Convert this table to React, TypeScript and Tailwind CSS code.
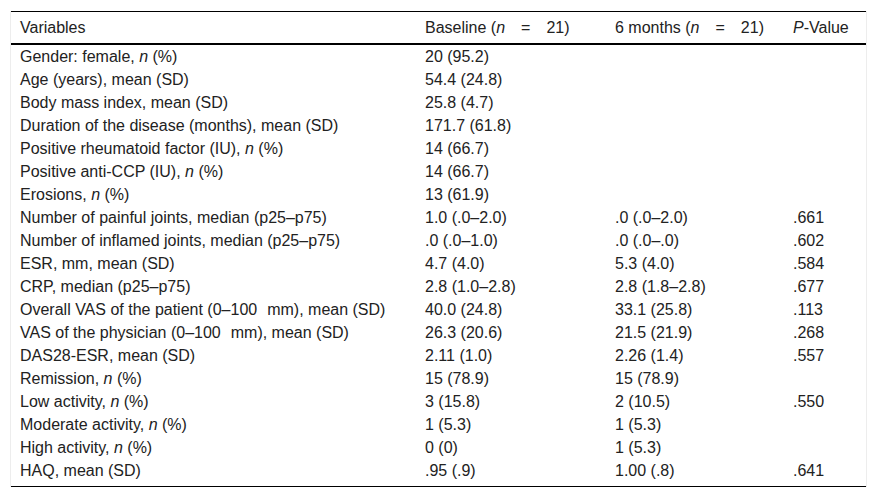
import type { ReactNode } from "react";

interface Row {
    label: ReactNode;
    baseline: string;
    sixMonths: string;
    p: string;
}

const N = () => <i>n</i>;

// wide gap used between "100" and "mm" in the source table
const Gap = () => <span className="inline-block w-[10px]" />;

const rows: Row[] = [
    { label: <>Gender: female, <N /> (%)</>, baseline: "20 (95.2)", sixMonths: "", p: "" },
    { label: "Age (years), mean (SD)", baseline: "54.4 (24.8)", sixMonths: "", p: "" },
    { label: "Body mass index, mean (SD)", baseline: "25.8 (4.7)", sixMonths: "", p: "" },
    { label: "Duration of the disease (months), mean (SD)", baseline: "171.7 (61.8)", sixMonths: "", p: "" },
    { label: <>Positive rheumatoid factor (IU), <N /> (%)</>, baseline: "14 (66.7)", sixMonths: "", p: "" },
    { label: <>Positive anti-CCP (IU), <N /> (%)</>, baseline: "14 (66.7)", sixMonths: "", p: "" },
    { label: <>Erosions, <N /> (%)</>, baseline: "13 (61.9)", sixMonths: "", p: "" },
    { label: "Number of painful joints, median (p25–p75)", baseline: "1.0 (.0–2.0)", sixMonths: ".0 (.0–2.0)", p: ".661" },
    { label: "Number of inflamed joints, median (p25–p75)", baseline: ".0 (.0–1.0)", sixMonths: ".0 (.0–.0)", p: ".602" },
    { label: "ESR, mm, mean (SD)", baseline: "4.7 (4.0)", sixMonths: "5.3 (4.0)", p: ".584" },
    { label: "CRP, median (p25–p75)", baseline: "2.8 (1.0–2.8)", sixMonths: "2.8 (1.8–2.8)", p: ".677" },
    { label: <>Overall VAS of the patient (0–100<Gap />mm), mean (SD)</>, baseline: "40.0 (24.8)", sixMonths: "33.1 (25.8)", p: ".113" },
    { label: <>VAS of the physician (0–100<Gap />mm), mean (SD)</>, baseline: "26.3 (20.6)", sixMonths: "21.5 (21.9)", p: ".268" },
    { label: "DAS28-ESR, mean (SD)", baseline: "2.11 (1.0)", sixMonths: "2.26 (1.4)", p: ".557" },
    { label: <>Remission, <N /> (%)</>, baseline: "15 (78.9)", sixMonths: "15 (78.9)", p: "" },
    { label: <>Low activity, <N /> (%)</>, baseline: "3 (15.8)", sixMonths: "2 (10.5)", p: ".550" },
    { label: <>Moderate activity, <N /> (%)</>, baseline: "1 (5.3)", sixMonths: "1 (5.3)", p: "" },
    { label: <>High activity, <N /> (%)</>, baseline: "0 (0)", sixMonths: "1 (5.3)", p: "" },
    { label: "HAQ, mean (SD)", baseline: ".95 (.9)", sixMonths: "1.00 (.8)", p: ".641" },
];

const cols = "grid grid-cols-[405px_190px_178px_1fr]";

export default function App() {
    return (
        <div className="min-h-screen bg-white pt-[11px] pl-[10px] font-['Liberation_Sans',Arial,sans-serif] text-[16px] leading-[18px] text-[#222]">
            <div className="w-[857px] border-x border-[#ededed]">
                {/* Header */}
                <div className={`${cols} h-[34px] items-center border-t border-b-2 border-black`}>
                    <div className="pl-[9px]">Variables</div>
                    <div className="pl-[9px] whitespace-nowrap">
                        Baseline (<i>n</i>{"\u2003=\u2003"}21)
                    </div>
                    <div className="pl-[9px] whitespace-nowrap">
                        6 months (<i>n</i>{"\u2003=\u2003"}21)
                    </div>
                    <div className="pl-[9px]">
                        <i>P</i>-Value
                    </div>
                </div>
                {/* Body */}
                <div className="border-b border-black pb-[4px]">
                    {rows.map((row, i) => (
                        <div key={i} className={`${cols} h-[23px] items-center`}>
                            <div className="pl-[9px] whitespace-nowrap">{row.label}</div>
                            <div className="pl-[9px]">{row.baseline}</div>
                            <div className="pl-[9px]">{row.sixMonths}</div>
                            <div className="pl-[9px]">{row.p}</div>
                        </div>
                    ))}
                </div>
            </div>
        </div>
    );
}
